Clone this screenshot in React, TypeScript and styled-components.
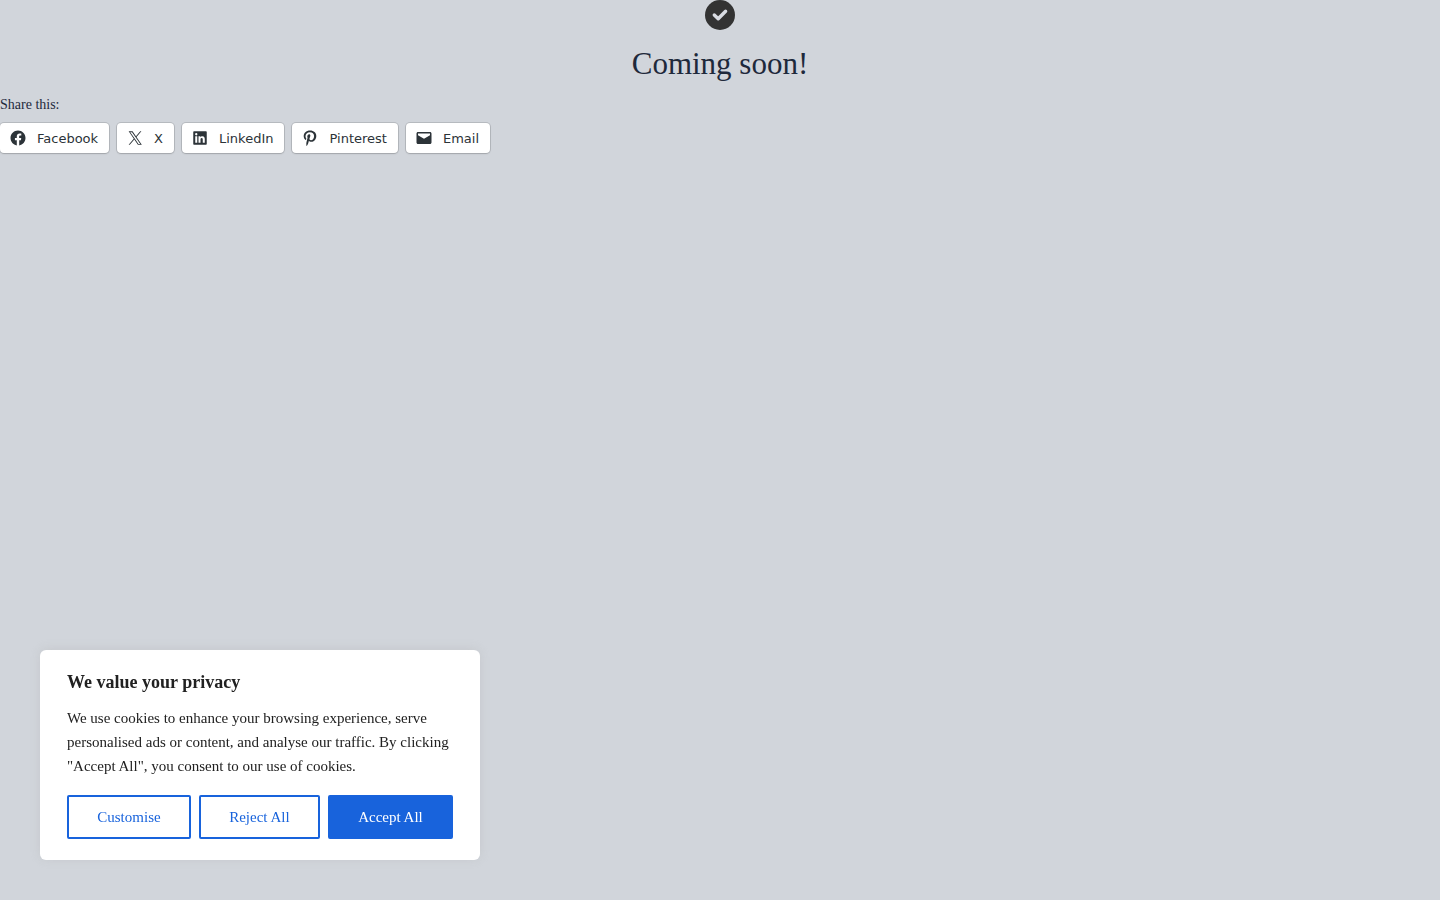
import React from "react";
import styled, { createGlobalStyle, css } from "styled-components";

const serif = `"Liberation Serif", "Times New Roman", serif`;
const sans = `"DejaVu Sans", sans-serif`;

const GlobalStyle = createGlobalStyle`
  *, *::before, *::after { box-sizing: border-box; }
  body {
    margin: 0;
    background: #d1d5db;
    color: #1e293b;
    font-family: ${serif};
  }
`;

const Page = styled.main`
  min-height: 100vh;
`;

const Hero = styled.header`
  display: flex;
  flex-direction: column;
  align-items: center;
  gap: 12px;
`;

const CheckBadge = styled.svg`
  display: block;
  width: 30px;
  height: 30px;
`;

const Title = styled.h1`
  margin: 0;
  font-size: 31px;
  line-height: 44px;
  font-weight: 400;
`;

const Share = styled.section`
  padding-top: 10px;
`;

const ShareTitle = styled.h2`
  margin: 0 0 9px;
  font-size: 14px;
  line-height: 18px;
  font-weight: 400;
`;

const ShareList = styled.ul`
  display: flex;
  flex-wrap: wrap;
  gap: 8px;
  margin: 0;
  padding: 0;
  list-style: none;
`;

const ShareLink = styled.a`
  display: flex;
  align-items: center;
  gap: 10px;
  height: 30px;
  padding: 0 11px 0 9px;
  border-radius: 4px;
  background: #fff;
  box-shadow: 0 1px 2px rgba(0, 0, 0, 0.12), 0 0 0 1px rgba(0, 0, 0, 0.12);
  color: #2c3338;
  font-family: ${sans};
  font-size: 13px;
  line-height: 24px;
  text-decoration: none;
`;

const ShareLabel = styled.span`
  padding-top: 2px;
`;

const ShareIcon = styled.svg`
  width: 18px;
  height: 18px;
  fill: currentColor;
`;

const Consent = styled.section`
  position: fixed;
  left: 40px;
  bottom: 40px;
  width: 440px;
  max-width: calc(100vw - 80px);
  padding: 20px 27px 21px;
  border-radius: 6px;
  background: #fff;
  box-shadow: 0 -1px 10px rgba(172, 171, 171, 0.3);
  color: #212121;
`;

const ConsentTitle = styled.h2`
  margin: 0 0 12px;
  font-size: 18px;
  line-height: 24px;
  font-weight: 700;
`;

const ConsentText = styled.p`
  margin: 0 0 17px;
  font-size: 15px;
  line-height: 24px;
`;

const ConsentActions = styled.div`
  display: flex;
  gap: 8px;
`;

const ConsentButton = styled.button<{ $primary?: boolean }>`
  flex: 1 1 auto;
  height: 44px;
  padding: 0 27px;
  border: 2px solid #1863dc;
  border-radius: 2px;
  background: transparent;
  color: #1863dc;
  font-family: inherit;
  font-size: 15px;
  line-height: 24px;
  white-space: nowrap;
  cursor: pointer;
  ${(p) =>
    p.$primary &&
    css`
      background: #1863dc;
      color: #fff;
    `}
`;

const networks = [
  {
    name: "Facebook",
    path: "M12,2C6.5,2,2,6.5,2,12c0,5,3.7,9.1,8.4,9.9v-7H7.9V12h2.5V9.8c0-2.5,1.5-3.9,3.8-3.9c1.1,0,2.2,0.2,2.2,0.2v2.5h-1.3c-1.2,0-1.6,0.8-1.6,1.6V12h2.8l-0.4,2.9h-2.3v7C18.3,21.1,22,17,22,12C22,6.5,17.5,2,12,2z",
  },
  {
    name: "X",
    path: "M13.982 10.622 20.54 3h-1.554l-5.693 6.618L8.745 3H3.5l6.876 10.007L3.5 21h1.554l6.012-6.989L15.868 21h5.245l-7.131-10.378Zm-2.128 2.474-.697-.997-5.543-7.93H8l4.474 6.4.697.996 5.815 8.318h-2.387l-4.745-6.787Z",
  },
  {
    name: "LinkedIn",
    path: "M19.7 3H4.3C3.582 3 3 3.582 3 4.3v15.4c0 .718.582 1.3 1.3 1.3h15.4c.718 0 1.3-.582 1.3-1.3V4.3c0-.718-.582-1.3-1.3-1.3zM8.339 18.338H5.667v-8.59h2.672v8.59zM7.004 8.574a1.548 1.548 0 1 1-.002-3.096 1.548 1.548 0 0 1 .002 3.096zM18.34 18.338h-2.669V14.16c0-.996-.017-2.278-1.387-2.278-1.389 0-1.601 1.086-1.601 2.206v4.25h-2.667v-8.59h2.559v1.174h.037c.356-.675 1.227-1.387 2.526-1.387 2.703 0 3.203 1.779 3.203 4.092v4.711z",
  },
  {
    name: "Pinterest",
    path: "M12.289,2C6.617,2,3.606,5.648,3.606,9.622c0,1.846,1.025,4.146,2.666,4.878c0.25,0.111,0.381,0.063,0.439-0.169c0.044-0.175,0.267-1.029,0.365-1.428c0.032-0.128,0.017-0.237-0.091-0.362C6.445,11.911,6.01,10.75,6.01,9.668c0-2.777,2.194-5.464,5.933-5.464c3.23,0,5.49,2.108,5.49,5.122c0,3.407-1.794,5.768-4.13,5.768c-1.291,0-2.257-1.021-1.948-2.277c0.372-1.495,1.089-3.112,1.089-4.191c0-0.967-0.542-1.775-1.663-1.775c-1.319,0-2.379,1.309-2.379,3.059c0,1.115,0.394,1.869,0.394,1.869s-1.302,5.279-1.54,6.261c-0.405,1.666,0.053,4.368,0.094,4.604c0.021,0.126,0.167,0.169,0.25,0.063c0.129-0.165,1.699-2.419,2.142-4.051c0.158-0.59,0.817-2.995,0.817-2.995c0.43,0.784,1.681,1.446,3.013,1.446c3.963,0,6.822-3.494,6.822-7.833C20.394,5.112,16.849,2,12.289,2",
  },
  {
    name: "Email",
    path: "M20,4H4C2.895,4,2,4.895,2,6v12c0,1.105,0.895,2,2,2h16c1.105,0,2-0.895,2-2V6C22,4.895,21.105,4,20,4zM20,8.236l-8,4.882L4,8.236V6h16V8.236z",
  },
];

export default function App() {
  return (
    <>
      <GlobalStyle />
      <Page>
        <Hero>
          <CheckBadge viewBox="0 0 30 30" aria-hidden="true">
            <circle cx="15" cy="15" r="15" fill="#333" />
            <path
              d="M9.3 15l3.9 3.8 7.4-7.6"
              fill="none"
              stroke="#d9dce3"
              strokeWidth="3.4"
              strokeLinecap="round"
              strokeLinejoin="round"
            />
          </CheckBadge>
          <Title>Coming soon!</Title>
        </Hero>
        <Share>
          <ShareTitle>Share this:</ShareTitle>
          <ShareList>
            {networks.map((n) => (
              <li key={n.name}>
                <ShareLink href="#">
                  <ShareIcon viewBox="0 0 24 24" aria-hidden="true">
                    <path d={n.path} />
                  </ShareIcon>
                  <ShareLabel>{n.name}</ShareLabel>
                </ShareLink>
              </li>
            ))}
          </ShareList>
        </Share>
      </Page>
      <Consent aria-labelledby="consent-title">
        <ConsentTitle id="consent-title">We value your privacy</ConsentTitle>
        <ConsentText>
          We use cookies to enhance your browsing experience, serve personalised
          ads or content, and analyse our traffic. By clicking "Accept All", you
          consent to our use of cookies.
        </ConsentText>
        <ConsentActions>
          <ConsentButton type="button">Customise</ConsentButton>
          <ConsentButton type="button">Reject All</ConsentButton>
          <ConsentButton type="button" $primary>
            Accept All
          </ConsentButton>
        </ConsentActions>
      </Consent>
    </>
  );
}
